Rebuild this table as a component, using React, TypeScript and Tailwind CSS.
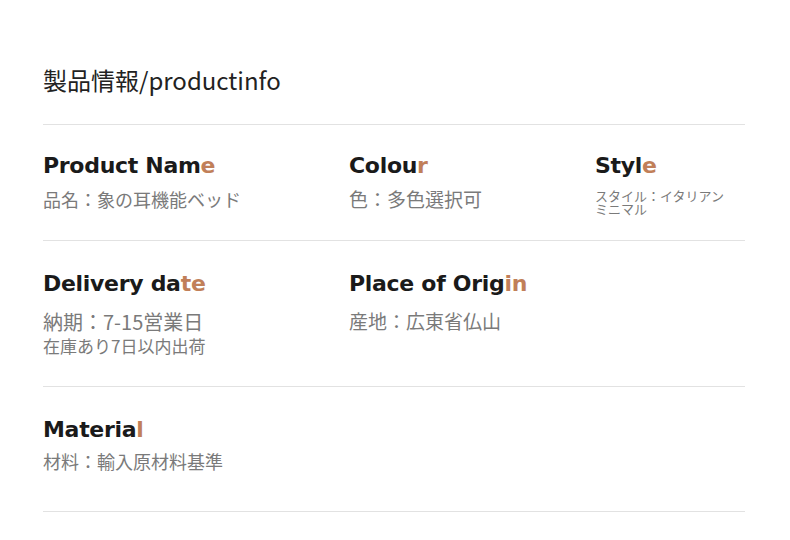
export default function App() {
  const head = "font-['DejaVu_Sans','Noto_Sans',sans-serif] font-bold text-[22px] leading-none tracking-[-0.3px] text-[#1a1a1a]";
  const sub = "font-['Noto_Sans_CJK_JP','Noto_Sans',sans-serif] text-[18px] leading-[24px] text-[#7a7a7a]";
  const accent = "text-[#c17f59]";

  return (
    <div className="w-[790px] h-[540px] bg-white px-[42px] pt-[64px] font-['Noto_Sans_CJK_JP',sans-serif]">
      <h1 className="text-[24px] leading-[32px] text-[#222] pl-px">製品情報/productinfo</h1>

      <div className="mt-[28px] ml-px w-[702px] border-t border-[#e2e2e2]">
        {/* Row 1 */}
        <div className="grid grid-cols-[306px_246px_150px] h-[116px] pt-[30px] border-b border-[#e2e2e2]">
          <div>
            <div className={head}>
              Product Nam<span className={accent}>e</span>
            </div>
            <div className={`${sub} mt-[10px]`}>品名：象の耳機能ベッド</div>
          </div>
          <div>
            <div className={head}>
              Colou<span className={accent}>r</span>
            </div>
            <div className={`${sub} mt-[10px] text-[19px]`}>色：多色選択可</div>
          </div>
          <div>
            <div className={head}>
              Styl<span className={accent}>e</span>
            </div>
            <div className="mt-[12px] w-[140px] font-['Noto_Sans_CJK_JP',sans-serif] text-[13px] leading-[13px] text-[#7a7a7a]">
              スタイル：イタリアンミニマル
            </div>
          </div>
        </div>

        {/* Row 2 */}
        <div className="grid grid-cols-[306px_246px_150px] h-[146px] pt-[32px] border-b border-[#e2e2e2]">
          <div>
            <div className={head}>
              Delivery da<span className={accent}>te</span>
            </div>
            <div className="mt-[14px] font-['Noto_Sans_CJK_JP',sans-serif] text-[20px] leading-[26px] text-[#7a7a7a]">
              納期：7-15営業日
            </div>
            <div className="font-['Noto_Sans_CJK_JP',sans-serif] text-[17px] leading-[22px] text-[#7a7a7a]">
              在庫あり7日以内出荷
            </div>
          </div>
          <div>
            <div className={head}>
              Place of Orig<span className={accent}>in</span>
            </div>
            <div className={`${sub} mt-[14px] text-[19px]`}>産地：広東省仏山</div>
          </div>
          <div />
        </div>

        {/* Row 3 */}
        <div className="h-[125px] pt-[32px] border-b border-[#e2e2e2]">
          <div className={head}>
            Materia<span className={accent}>l</span>
          </div>
          <div className={`${sub} mt-[8px]`}>材料：輸入原材料基準</div>
        </div>
      </div>
    </div>
  );
}
